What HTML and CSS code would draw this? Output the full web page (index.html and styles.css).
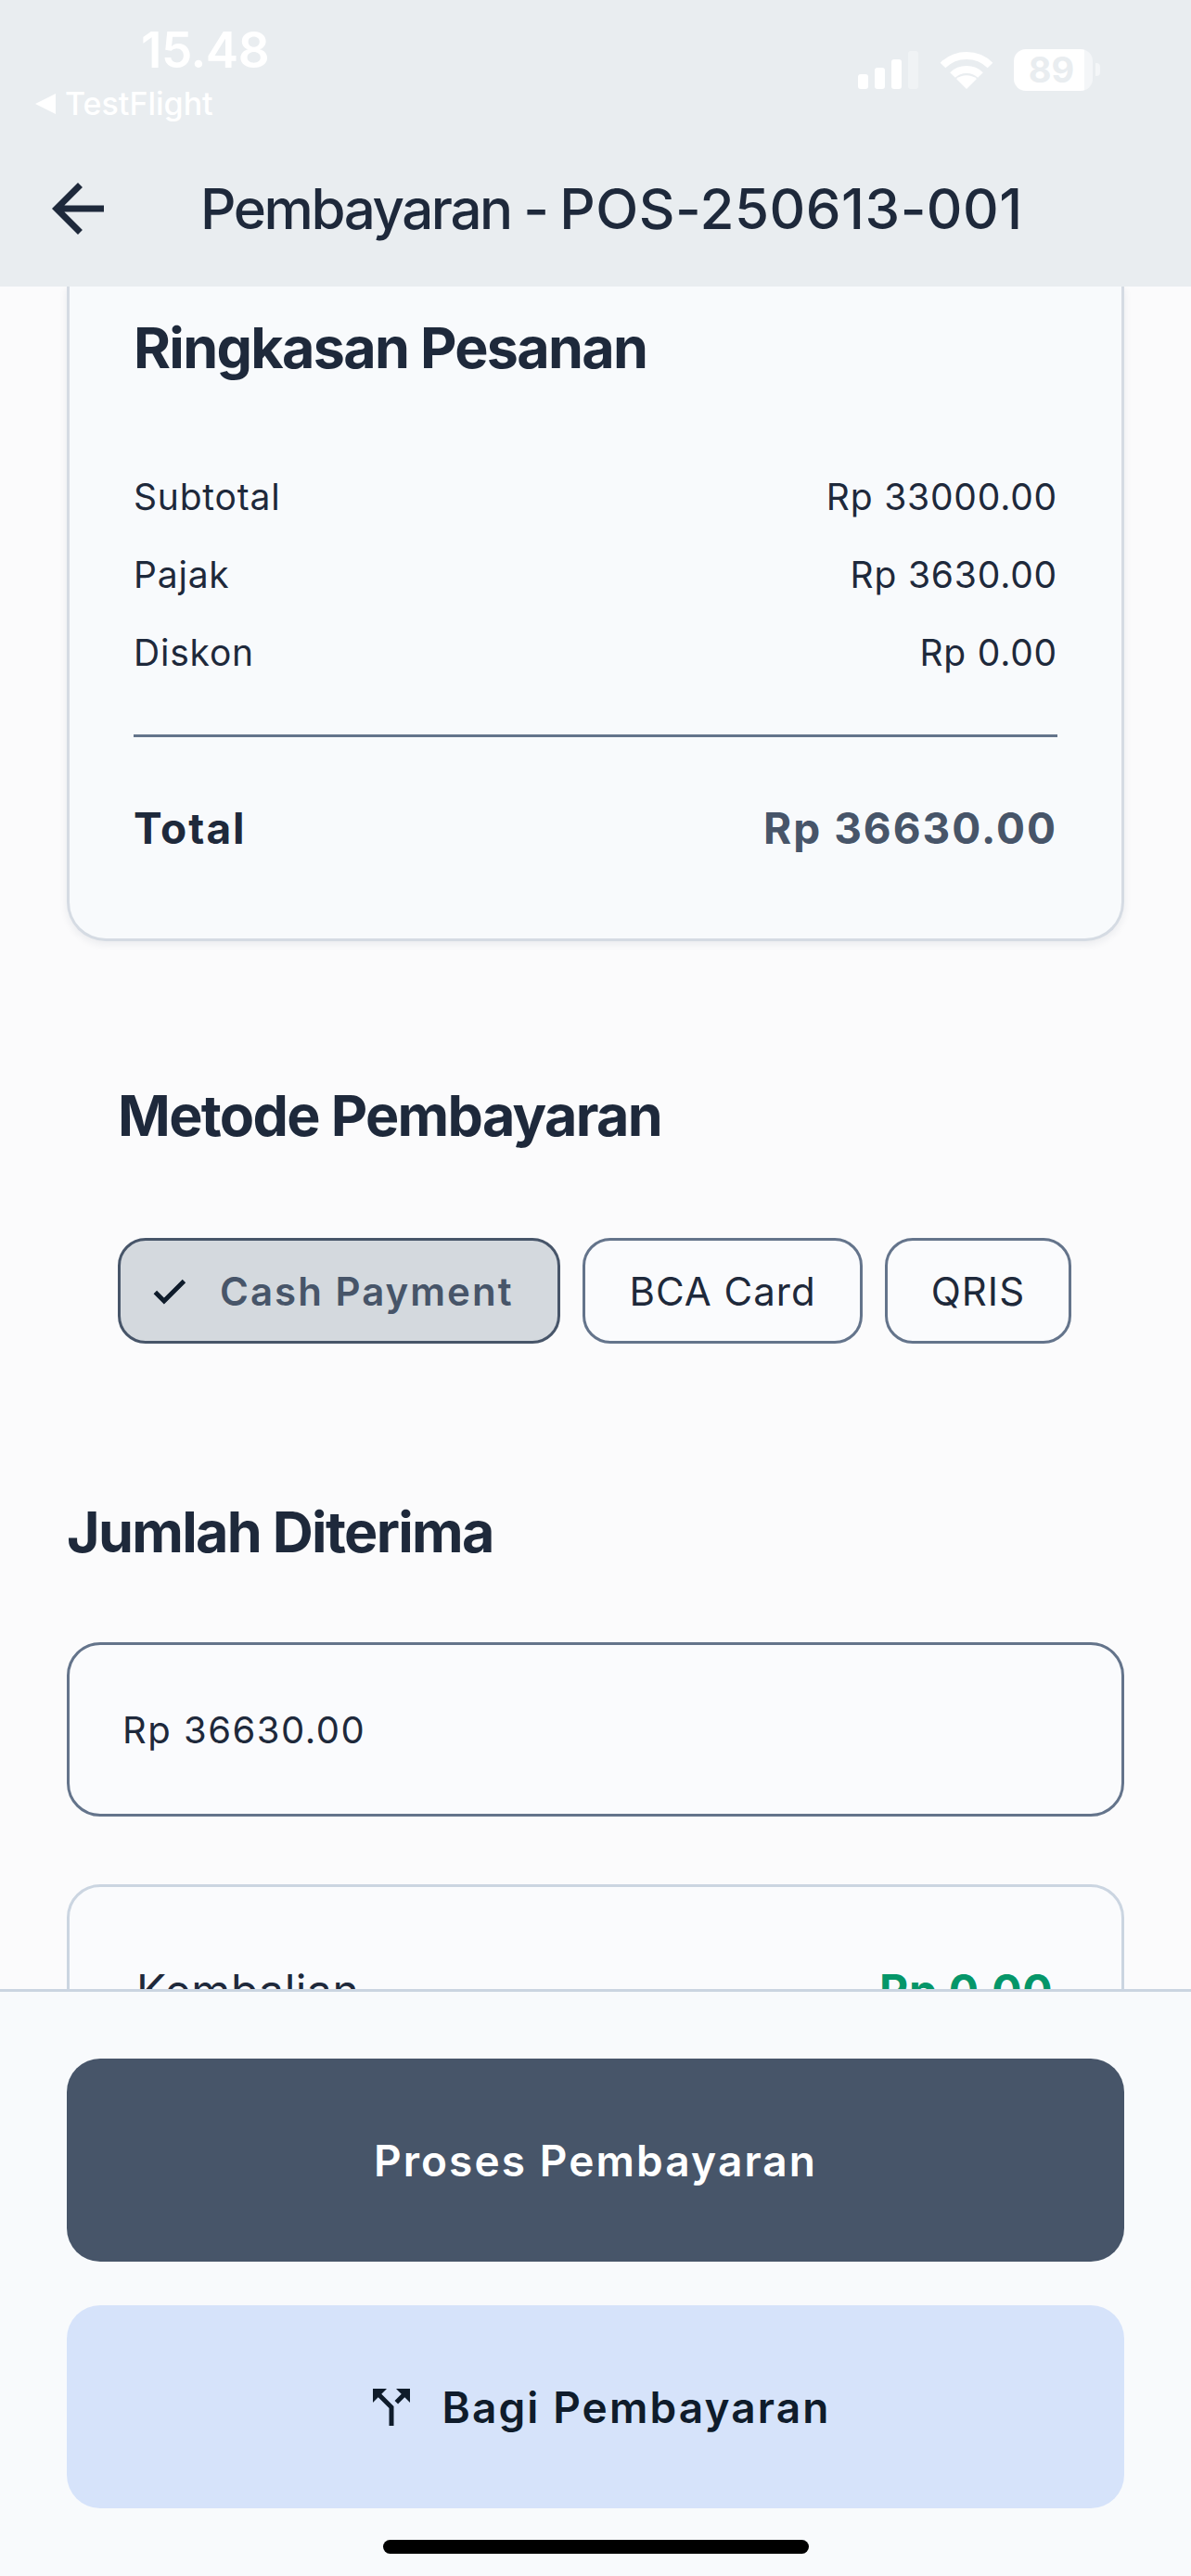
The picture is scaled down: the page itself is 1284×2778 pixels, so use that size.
FILE: index.html
```html
<!DOCTYPE html>
<html>

<head>
    <title>Pembayaran</title>
    <meta charset="utf-8" />
    <link rel="stylesheet" href="styles.css">
</head>

<body>
    <div class="phone">
        <header class="header">
            <div class="status">
                <div class="statusLeft">
                    <div class="time">15.48</div>
                    <div class="backApp"><span class="backTri"></span>TestFlight</div>
                </div>
                <div class="statusRight">
                    <div class="signal">
                        <span class="bar bar1"></span>
                        <span class="bar bar2"></span>
                        <span class="bar bar3"></span>
                        <span class="bar bar4"></span>
                    </div>
                    <svg class="wifi" viewBox="0 0 58 41">
                        <path d="M3.500 15.500C17.500 1.500 40.500 1.500 54.500 15.500" fill="none" stroke="#fff" stroke-width="8" />
                        <path d="M14 26C22 18 36 18 44 26" fill="none" stroke="#fff" stroke-width="8" />
                        <path d="M29 41L18 30C24 25 34 25 40 30z" fill="#fff" />
                    </svg>
                    <div class="battery"><span class="batteryLevel">89</span></div>
                    <span class="batteryNub"></span>
                </div>
            </div>
            <div class="nav">
                <svg class="backIcon" viewBox="0 0 24 24">
                    <path d="M20 11H7.830l5.590-5.590L12 4l-8 8 8 8 1.410-1.410L7.830 13H20v-2z" />
                </svg>
                <div class="navTitle">Pembayaran - <span class="navOrder">POS-250613-001</span></div>
            </div>
        </header>

        <main class="content">
            <section class="summary">
                <h2 class="summaryTitle">Ringkasan Pesanan</h2>
                <div class="row"><span>Subtotal</span><span>Rp 33000.00</span></div>
                <div class="row"><span>Pajak</span><span>Rp 3630.00</span></div>
                <div class="row"><span>Diskon</span><span>Rp 0.00</span></div>
                <div class="divider"></div>
                <div class="totalRow"><span>Total</span><span class="totalValue">Rp 36630.00</span></div>
            </section>

            <section class="methods">
                <h2 class="sectionTitle">Metode Pembayaran</h2>
                <div class="chips">
                    <div class="chip chipActive">
                        <svg class="checkIcon" viewBox="0 0 24 24">
                            <path d="M9 16.170L4.830 12l-1.420 1.410L9 19 21 7l-1.410-1.410z" />
                        </svg>
                        Cash Payment
                    </div>
                    <div class="chip">BCA Card</div>
                    <div class="chip">QRIS</div>
                </div>
            </section>

            <section class="received">
                <h2 class="sectionTitle">Jumlah Diterima</h2>
                <div class="amountInput">Rp 36630.00</div>
                <div class="changeCard">
                    <span>Kembalian</span>
                    <span class="changeValue">Rp 0.00</span>
                </div>
            </section>
        </main>

        <footer class="footer">
            <div class="btn btnPrimary">Proses Pembayaran</div>
            <div class="btn btnSecondary">
                <svg class="splitIcon" viewBox="0 0 24 24">
                    <path d="M14 4l2.290 2.290-2.880 2.880 1.420 1.420 2.880-2.880L20 10V4zm-4 0H4v6l2.290-2.290 4.710 4.700V20h2v-8.410l-5.290-5.300z" />
                </svg>
                Bagi Pembayaran
            </div>
            <div class="homeBar"></div>
        </footer>
    </div>
</body>

</html>
```

FILE: styles.css
```css
* {
    box-sizing: border-box;
}

body {
    margin: 0;
    padding: 0;
    overflow: hidden;
    font-family: Inter, "Noto Sans", sans-serif;
    background-color: #fbfbfc;
    color: #1e293b;
}

.phone {
    width: 1284px;
    height: 2778px;
    display: flex;
    flex-direction: column;
    overflow: hidden;
}

/* 顶部 */
.header {
    height: 309px;
    flex: none;
    background-color: #e9edf0;
}

.status {
    height: 143px;
    display: flex;
    justify-content: space-between;
    padding: 24px 98px 0 38px;
}

.time {
    margin-left: 114px;
    color: #fff;
    font-size: 53px;
    line-height: 60px;
    font-weight: 600;
    letter-spacing: -0.5px;
}

.backApp {
    display: flex;
    align-items: center;
    gap: 10px;
    margin-top: 5px;
    color: #fff;
    font-size: 34px;
    line-height: 46px;
    font-weight: 500;
}

.backTri {
    width: 0;
    height: 0;
    border-style: solid;
    border-width: 11px 22px 11px 0;
    border-color: transparent #fff transparent transparent;
}

.statusRight {
    display: flex;
    align-items: flex-start;
    padding-top: 29px;
}

.signal {
    display: flex;
    align-items: flex-end;
    gap: 7px;
    height: 41px;
    margin-top: 2px;
}

.bar {
    width: 11px;
    border-radius: 3px;
    background-color: #fff;
}

.bar1 {
    height: 16px;
}

.bar2 {
    height: 23px;
}

.bar3 {
    height: 32px;
}

.bar4 {
    height: 41px;
    opacity: .35;
}

.wifi {
    width: 58px;
    height: 41px;
    margin: 2px 22px 0 23px;
}

.battery {
    width: 85px;
    height: 45px;
    border-radius: 13px;
    background: linear-gradient(to right, #fff 89%, #f4f6f8 89%);
    text-align: center;
}

.batteryLevel {
    display: block;
    padding-right: 4px;
    color: #e9edf0;
    font-size: 38px;
    line-height: 45px;
    font-weight: 700;
}

.batteryNub {
    width: 5px;
    height: 14px;
    margin: 15px 0 0 3px;
    border-radius: 0 4px 4px 0;
    background-color: #f4f6f8;
}

.nav {
    display: flex;
    align-items: center;
    height: 164px;
    padding-left: 42px;
}

.backIcon {
    width: 84px;
    height: 84px;
    fill: #1e293b;
}

.navTitle {
    margin-left: 90px;
    font-size: 60px;
    line-height: 84px;
    font-weight: 500;
    letter-spacing: -2.400px;
    word-spacing: 0;
    white-space: nowrap;
}

.navOrder {
    letter-spacing: .5px;
}

/* 内容 */
.content {
    flex: 1;
    min-height: 0;
    overflow: hidden;
    padding: 0 72px;
}

.summary {
    height: 706px;
    padding: 32px 69px 0;
    border: 3px solid #d5dbe3;
    border-top: 0;
    border-radius: 0 0 42px 42px;
    background-color: #f8fafc;
    box-shadow: 0 3px 8px rgba(30, 41, 59, .08);
}

.summaryTitle,
.sectionTitle {
    margin: 0;
    font-size: 61px;
    line-height: 68px;
    font-weight: 700;
    letter-spacing: -1.700px;
}

.summaryTitle {
    margin-bottom: 102px;
}

.row,
.totalRow {
    display: flex;
    justify-content: space-between;
}

.row {
    height: 84px;
    font-size: 39px;
    line-height: 50px;
    letter-spacing: .8px;
}

.divider {
    height: 3px;
    margin-top: 29px;
    background-color: #64748b;
}

.totalRow {
    margin-top: 70px;
    font-size: 46px;
    line-height: 56px;
    font-weight: 700;
    letter-spacing: 2px;
}

.totalValue {
    color: #475569;
}

.methods {
    padding-top: 154px;
}

.methods .sectionTitle {
    padding-left: 55px;
}

.chips {
    display: flex;
    gap: 24px;
    margin: 98px 0 0 55px;
}

.chip {
    display: flex;
    align-items: center;
    height: 114px;
    padding: 0 47px;
    border: 3px solid #64748b;
    border-radius: 30px;
    background-color: #fafbfd;
    font-size: 42px;
    letter-spacing: 1px;
}

.chipActive {
    padding: 0 48px 0 30px;
    border-color: #475569;
    background-color: #d4d9de;
    color: #475569;
    font-weight: 600;
    letter-spacing: 2px;
}

.checkIcon {
    width: 45px;
    height: 45px;
    margin-right: 32px;
    fill: #0f1c2b;
    stroke: #0f1c2b;
    stroke-width: .6;
}

.received {
    padding-top: 169px;
}

.amountInput {
    display: flex;
    align-items: center;
    height: 188px;
    margin-top: 85px;
    padding-left: 57px;
    border: 3px solid #64748b;
    border-radius: 36px;
    background-color: #fafbfd;
    font-size: 40px;
    letter-spacing: 1.500px;
}

.changeCard {
    display: flex;
    justify-content: space-between;
    height: 200px;
    margin-top: 73px;
    padding: 84px 74px 0 72px;
    border: 3px solid #cbd5e1;
    border-radius: 36px;
    background-color: #fafbfd;
    font-size: 48px;
    line-height: 56px;
    letter-spacing: .5px;
}

.changeValue {
    color: #059669;
    font-weight: 700;
}

/* 底部按钮 */
.footer {
    height: 633px;
    flex: none;
    display: flex;
    flex-direction: column;
    gap: 47px;
    padding: 72px 72px 0;
    border-top: 3px solid #cbd5e1;
    background-color: #f8fafc;
}

.btn {
    flex: none;
    display: flex;
    align-items: center;
    justify-content: center;
    height: 219px;
    border-radius: 36px;
    font-size: 46px;
    font-weight: 600;
    letter-spacing: 2.100px;
}

.btnPrimary {
    background-color: #475569;
    color: #fff;
}

.btnSecondary {
    background-color: #d6e3fa;
    color: #0f1c2b;
}

.splitIcon {
    width: 60px;
    height: 60px;
    margin: 0 25px 0 3px;
    fill: #0f1c2b;
}

.homeBar {
    width: 459px;
    height: 15px;
    margin: -13px auto 0;
    border-radius: 8px;
    background-color: #000;
}
```
